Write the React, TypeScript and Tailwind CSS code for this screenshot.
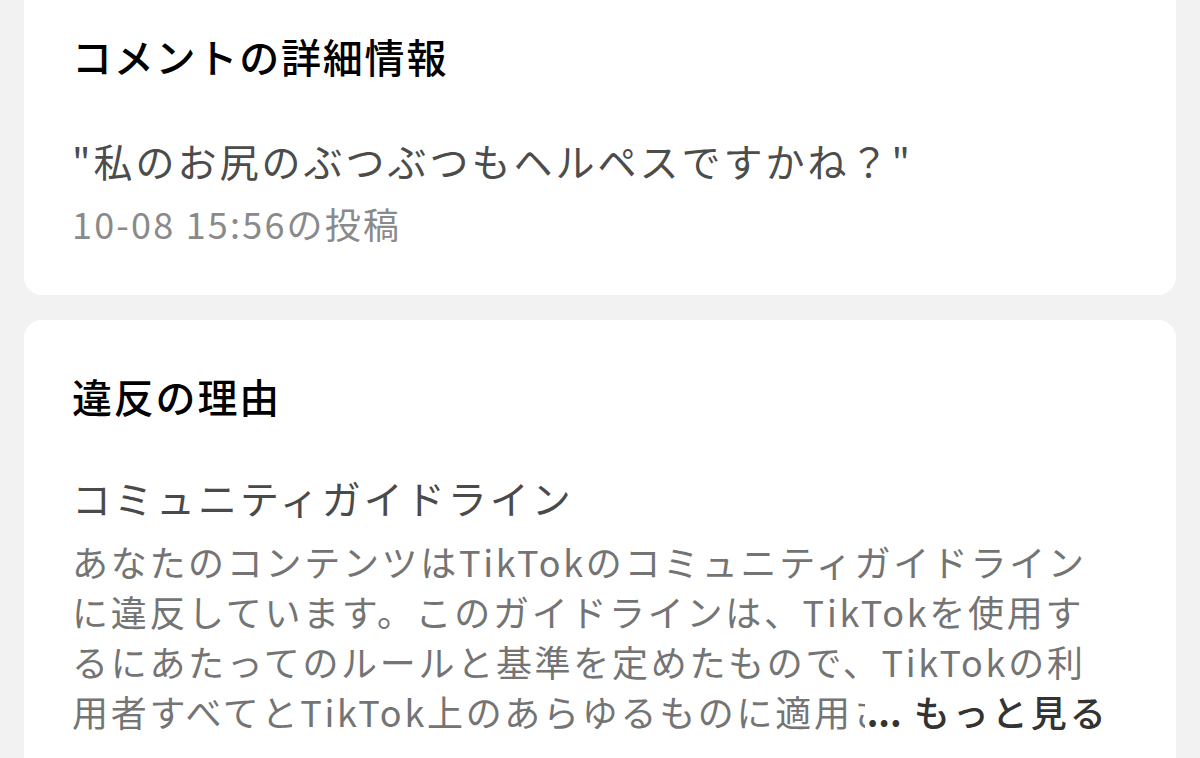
import React from "react";

const font = { fontFamily: '"Noto Sans CJK JP", "Noto Sans", sans-serif' };

export default function App() {
  return (
    <div className="min-h-[758px] w-full bg-[#f2f2f2] px-[24px] overflow-hidden" style={font}>
      <div className="bg-white rounded-b-[18px] pl-[48px] pr-[24px] pt-[28px] pb-[47px]">
        <div className="text-[40px] leading-[56px] font-medium text-black tracking-[1.8px]">
          コメントの詳細情報
        </div>
        <div className="mt-[48px] text-[39px] leading-[56px] text-[#4c4c4c] tracking-[3px] whitespace-nowrap">
          "私のお尻のぶつぶつもヘルペスですかね？"
        </div>
        <div className="mt-[10px] text-[36px] leading-[50px] text-[#8a8a8a] tracking-[2.2px] whitespace-nowrap">
          10-08 15:56の投稿
        </div>
      </div>

      <div className="mt-[25px] bg-white rounded-t-[18px] pl-[48px] pr-[24px] pt-[48px] pb-[40px]">
        <div className="text-[40px] leading-[56px] font-medium text-black tracking-[1.8px]">
          違反の理由
        </div>
        <div className="mt-[45px] text-[39px] leading-[56px] text-[#4a4a4a] tracking-[3px] whitespace-nowrap">
          コミュニティガイドライン
        </div>
        <div className="mt-[11px] text-[36px] leading-[50px] text-[#747474] tracking-[2.7px] whitespace-nowrap">
          <div>あなたのコンテンツはTikTokのコミュニティガイドライン</div>
          <div>に違反しています。このガイドラインは、TikTokを使用す</div>
          <div>るにあたってのルールと基準を定めたもので、TikTokの利</div>
          <div>
            用者すべてとTikTok上のあらゆるものに適用
            <span className="inline-block w-[12px] overflow-hidden align-bottom tracking-normal">さ</span>
            <span className="ml-[2px] font-semibold text-[#333333] tracking-normal">...</span>
            <span className="ml-[12px] font-medium text-[#333333] tracking-[3px]">もっと見る</span>
          </div>
        </div>
      </div>
    </div>
  );
}
